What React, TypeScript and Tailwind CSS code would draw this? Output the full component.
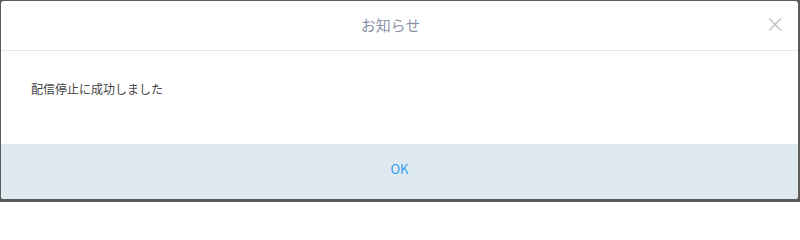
export default function App() {
  return (
    <div className="h-[202px] w-[800px] bg-[#5c5c5c] pt-px pl-px pr-[2px] pb-[3px] font-['Noto_Sans_CJK_JP',sans-serif]">
      <div className="flex h-[198px] flex-col overflow-hidden rounded-[3px] bg-white">
        <div className="relative flex h-[50px] shrink-0 items-center justify-center border-b border-[#e8e8e8] pr-[18px]">
          <span className="text-[15px] text-[#8a93a6]">お知らせ</span>
          <span className="absolute right-[13px] top-[13px] text-[20px] leading-none text-[#c4c4c4]">×</span>
        </div>
        <div className="h-[93px] shrink-0 px-[30px] pt-[29px] text-[12px] text-[#444]">
          配信停止に成功しました
        </div>
        <div className="flex flex-1 items-center justify-center bg-[#dfeaf0] pb-[6px]">
          <span className="text-[13px] text-[#2f9bf0]">OK</span>
        </div>
      </div>
    </div>
  );
}
